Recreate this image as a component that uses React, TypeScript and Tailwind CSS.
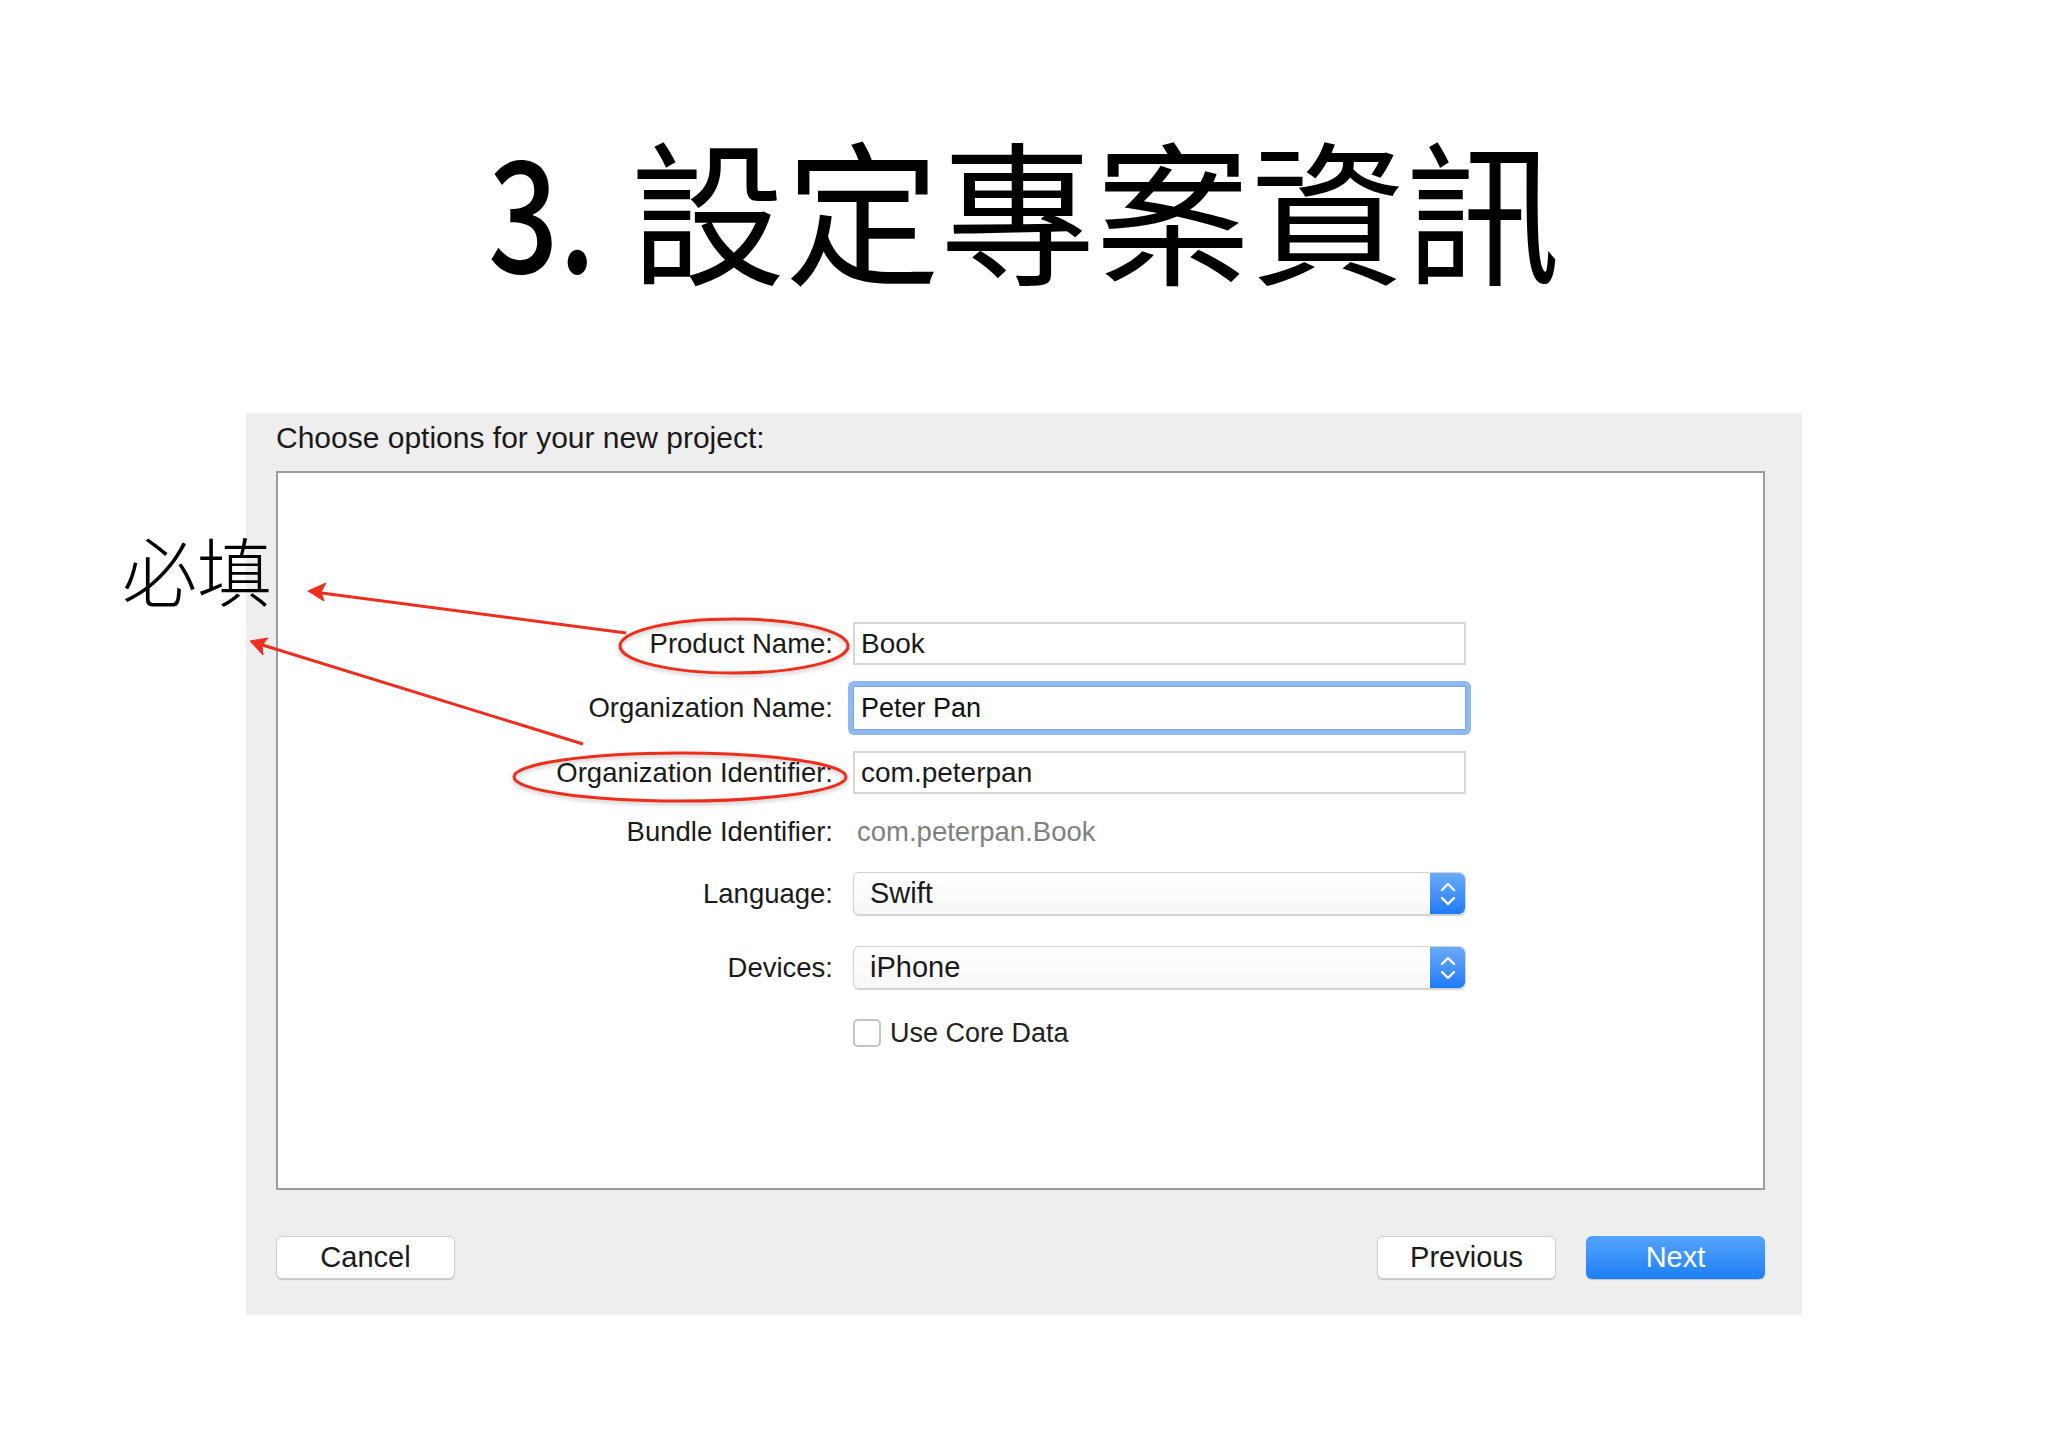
import React from "react";

const SANS = "font-['Liberation_Sans',Arial,sans-serif]";

function Label({ children }: { children: React.ReactNode }) {
  return (
    <div className="w-[575px] pr-[20px] text-right text-[27.5px] leading-none text-[#1a1a1a]">
      {children}
    </div>
  );
}

function TextField({ value, focused }: { value: string; focused?: boolean }) {
  if (focused) {
    return (
      <div className="ml-[-5px] w-[623px] rounded-[6px] bg-[#8fb9f1] p-[5px]">
        <div className="flex h-[44px] items-center border border-[#7aa6e6] bg-white pl-[7px] text-[27px] text-[#111]">
          {value}
        </div>
      </div>
    );
  }
  return (
    <div className="flex h-[43px] w-[613px] items-center border-2 border-[#d6d6d6] bg-white pl-[6px] text-[28px] text-[#1a1a1a]">
      {value}
    </div>
  );
}

function Stepper() {
  return (
    <div className="flex h-full w-[35px] items-center justify-center rounded-r-[6px] bg-gradient-to-b from-[#6aaaf8] to-[#1a7bf6]">
      <svg width="20" height="30" viewBox="0 0 20 30" fill="none">
        <path d="M4 11 L10 5 L16 11" stroke="white" strokeWidth="2.4" strokeLinecap="round" strokeLinejoin="round" />
        <path d="M4 19 L10 25 L16 19" stroke="white" strokeWidth="2.4" strokeLinecap="round" strokeLinejoin="round" />
      </svg>
    </div>
  );
}

function Popup({ value }: { value: string }) {
  return (
    <div className="flex h-[43px] w-[613px] overflow-hidden rounded-[6px] border border-[#d2d2d2] bg-gradient-to-b from-white to-[#f7f7f7] shadow-[0_1px_1px_rgba(0,0,0,0.18)]">
      <div className="flex flex-1 items-center pl-[16px] text-[29px] text-[#1a1a1a]">{value}</div>
      <Stepper />
    </div>
  );
}

function Button({ children, primary }: { children: React.ReactNode; primary?: boolean }) {
  if (primary) {
    return (
      <button className="flex h-[43px] w-[179px] items-center justify-center rounded-[6px] bg-gradient-to-b from-[#53a3fb] to-[#1b7ff6] text-[29px] text-white shadow-[0_1px_1px_rgba(0,0,0,0.2)]">
        {children}
      </button>
    );
  }
  return (
    <button className="flex h-[43px] w-[179px] items-center justify-center rounded-[6px] border border-[#cfcfcf] bg-white text-[29px] text-[#1a1a1a] shadow-[0_1px_1px_rgba(0,0,0,0.18)]">
      {children}
    </button>
  );
}

function Annotations() {
  const red = "#ec2f1f";
  return (
    <svg className="pointer-events-none absolute left-0 top-0" width="2048" height="1447" viewBox="0 0 2048 1447">
      <defs>
        <filter id="sh" x="-20%" y="-50%" width="140%" height="200%">
          <feDropShadow dx="0" dy="2" stdDeviation="2" floodColor="#000" floodOpacity="0.25" />
        </filter>
      </defs>
      <g filter="url(#sh)" fill="none" stroke={red} strokeWidth="3">
        <ellipse cx="734" cy="646" rx="114" ry="27" />
        <ellipse cx="680" cy="777" rx="166" ry="24" />
      </g>
      <g stroke={red} strokeWidth="3" fill={red}>
        <line x1="626" y1="633" x2="314" y2="592" />
        <path d="M308 591 L326 583 L321 592 L324 601 Z" strokeWidth="1" />
        <line x1="583" y1="744" x2="256" y2="643" />
        <path d="M250 641 L268 638 L262 645 L263 655 Z" strokeWidth="1" />
      </g>
    </svg>
  );
}

export default function App() {
  return (
    <div className={`relative h-[1447px] w-[2048px] overflow-hidden bg-white ${SANS}`}>
      <div className="flex h-[413px] justify-center pt-[128px]">
        <h1 className="font-['Noto_Sans_CJK_TC',sans-serif] text-[155px] leading-none text-black">
          <span className="mr-[8px] inline-block origin-left scale-x-[0.8] font-medium">3.</span>
          <span className="font-normal">設定專案資訊</span>
        </h1>
      </div>

      <div className="ml-[246px] h-[902px] w-[1556px] bg-[#efeeef] pl-[30px] pr-[37px]">
        <div className="h-[58px] pt-[9px] text-[30px] leading-[32px] text-[#1a1a1a]">
          Choose options for your new project:
        </div>

        <div className="flex h-[719px] flex-col border-2 border-[#9c9c9c] bg-white">
          <div className="mt-[149px] flex h-[43px] items-center">
            <Label>Product Name:</Label>
            <TextField value="Book" />
          </div>
          <div className="mt-[16px] flex h-[54px] items-center">
            <Label>Organization Name:</Label>
            <TextField value="Peter Pan" focused />
          </div>
          <div className="mt-[16px] flex h-[43px] items-center">
            <Label>Organization Identifier:</Label>
            <TextField value="com.peterpan" />
          </div>
          <div className="mt-[18px] flex h-[40px] items-center">
            <Label>Bundle Identifier:</Label>
            <div className="pl-[4px] text-[27.5px] text-[#808080]">com.peterpan.Book</div>
          </div>
          <div className="mt-[20px] flex h-[43px] items-center">
            <Label>Language:</Label>
            <Popup value="Swift" />
          </div>
          <div className="mt-[31px] flex h-[43px] items-center">
            <Label>Devices:</Label>
            <Popup value="iPhone" />
          </div>
          <div className="mt-[30px] flex h-[28px] items-center">
            <div className="w-[575px]" />
            <div className="h-[28px] w-[28px] rounded-[5px] border-2 border-[#c4c4c4] bg-white" />
            <div className="pl-[9px] text-[27px] text-[#222]">Use Core Data</div>
          </div>
        </div>

        <div className="mt-[46px] flex items-center">
          <Button>Cancel</Button>
          <div className="flex-1" />
          <Button>Previous</Button>
          <div className="w-[30px]" />
          <Button primary>Next</Button>
        </div>
      </div>

      <div className="absolute left-[122px] top-[531px] font-['Noto_Sans_CJK_TC',sans-serif] text-[75px] font-light leading-none text-black">
        必填
      </div>

      <Annotations />
    </div>
  );
}
